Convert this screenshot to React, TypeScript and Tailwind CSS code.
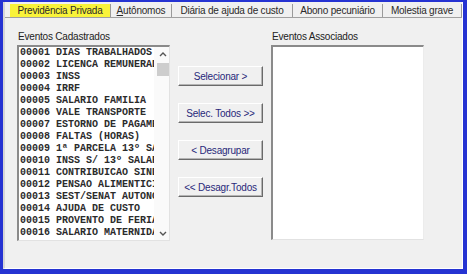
import { type ReactNode } from "react";

const eventos = [
  "00001 DIAS TRABALHADOS",
  "00002 LICENCA REMUNERADA",
  "00003 INSS",
  "00004 IRRF",
  "00005 SALARIO FAMILIA",
  "00006 VALE TRANSPORTE",
  "00007 ESTORNO DE PAGAMENTO",
  "00008 FALTAS (HORAS)",
  "00009 1ª PARCELA 13º SALARIO",
  "00010 INSS S/ 13º SALARIO",
  "00011 CONTRIBUICAO SINDICAL",
  "00012 PENSAO ALIMENTICIA",
  "00013 SEST/SENAT AUTONOMO",
  "00014 AJUDA DE CUSTO",
  "00015 PROVENTO DE FERIAS",
  "00016 SALARIO MATERNIDADE",
];

const abas: { rotulo: ReactNode; largura: string; ativa?: boolean }[] = [
  { rotulo: "Previdência Privada", largura: "w-[101px]", ativa: true },
  {
    rotulo: (
      <>
        <span className="underline">A</span>utônomos
      </>
    ),
    largura: "w-[61px]",
  },
  { rotulo: "Diária de ajuda de custo", largura: "w-[121px]" },
  { rotulo: "Abono pecuniário", largura: "w-[90px]" },
  { rotulo: "Molestia grave", largura: "w-[79px]" },
];

const botoes = [
  "Selecionar >",
  "Selec. Todos >>",
  "< Desagrupar",
  "<< Desagr.Todos",
];

function Seta({ baixo = false }: { baixo?: boolean }) {
  return (
    <svg width="8" height="5" viewBox="0 0 8 5" className="block">
      <path
        d={baixo ? "M1 1 L4 4 L7 1" : "M1 4 L4 1 L7 4"}
        fill="none"
        stroke="#555"
        strokeWidth="1.4"
      />
    </svg>
  );
}

function Rotulo({ children }: { children: ReactNode }) {
  return (
    <div className="mb-[2px] h-[12px] pl-[1px] text-[10px] leading-[12px] tracking-[-0.2px] text-[#222]">
      {children}
    </div>
  );
}

export default function App() {
  return (
    <div
      className="
        flex h-[274px] w-[467px] flex-col
        border-t-2 border-r-4 border-b-[5px] border-l-[3px]
        border-[#2533d2]
        bg-[#f0f0f0]
        font-['Liberation_Sans',Arial,sans-serif]
      "
    >
      <div
        className="
          flex flex-1 flex-col
          border-l-2 border-[#d6d6d6]
          border-b border-b-white
          border-r border-r-white
        "
      >
        <div
          className="
            flex h-[16px] items-end
            border-b border-[#a0a0a0]
            pl-[5px]
          "
        >
          {abas.map((aba, i) => (
            <div
              key={i}
              className={`
                flex h-[13px] items-center justify-center
                border-r border-[#9a9a9a]
                text-[10px] leading-none tracking-[-0.2px]
                text-[#2a2a2a] whitespace-nowrap
                ${aba.largura}
                ${aba.ativa ? "bg-[#f9f33a]" : ""}
              `}
            >
              <span>{aba.rotulo}</span>
            </div>
          ))}
        </div>

        <div className="flex flex-1 gap-[8px] pt-[13px] pl-[12px]">
          <div className="flex w-[153px] flex-col">
            <Rotulo>Eventos Cadastrados</Rotulo>
            <div
              className="
                flex h-[196px]
                border-t-2 border-l-2 border-[#8a8a8a]
                border-r border-b border-r-[#e2e2e2] border-b-[#e2e2e2]
                bg-white
              "
            >
              <div className="flex-1 overflow-hidden pl-[1px]">
                {eventos.map((evento) => (
                  <div
                    key={evento}
                    className="
                      h-[12px] whitespace-pre
                      font-['Liberation_Mono','Courier_New',monospace]
                      text-[10px] font-bold leading-[12px]
                      text-[#2b2b2b]
                    "
                  >
                    {evento}
                  </div>
                ))}
              </div>
              <div className="flex w-[15px] flex-col items-end bg-[#fafafa]">
                <div className="flex h-[15px] w-[13px] items-center justify-center">
                  <Seta />
                </div>
                <div className="mt-[1px] h-[13px] w-[12px] bg-[#cdcdcd]" />
                <div className="flex-1" />
                <div className="flex h-[14px] w-[13px] items-center justify-center">
                  <Seta baixo />
                </div>
              </div>
            </div>
          </div>

          <div className="flex w-[85px] flex-col gap-[17px] pt-[35px]">
            {botoes.map((botao) => (
              <div
                key={botao}
                className="
                  flex h-[20px] items-center justify-center
                  border border-t-white border-l-white
                  border-r-[#6a6a6a] border-b-[#6a6a6a]
                  bg-[#f0f0f0]
                  shadow-[inset_-1px_-1px_0_#b4b4b4]
                  text-[10px] tracking-[-0.2px] text-[#28287a]
                  whitespace-nowrap
                "
              >
                {botao}
              </div>
            ))}
          </div>

          <div className="flex w-[153px] flex-col">
            <Rotulo>Eventos Associados</Rotulo>
            <div
              className="
                h-[195px]
                border-t-2 border-l-2 border-[#8a8a8a]
                border-r border-b border-r-[#ececec] border-b-[#e2e2e2]
                bg-white
              "
            />
          </div>
        </div>
      </div>
    </div>
  );
}
